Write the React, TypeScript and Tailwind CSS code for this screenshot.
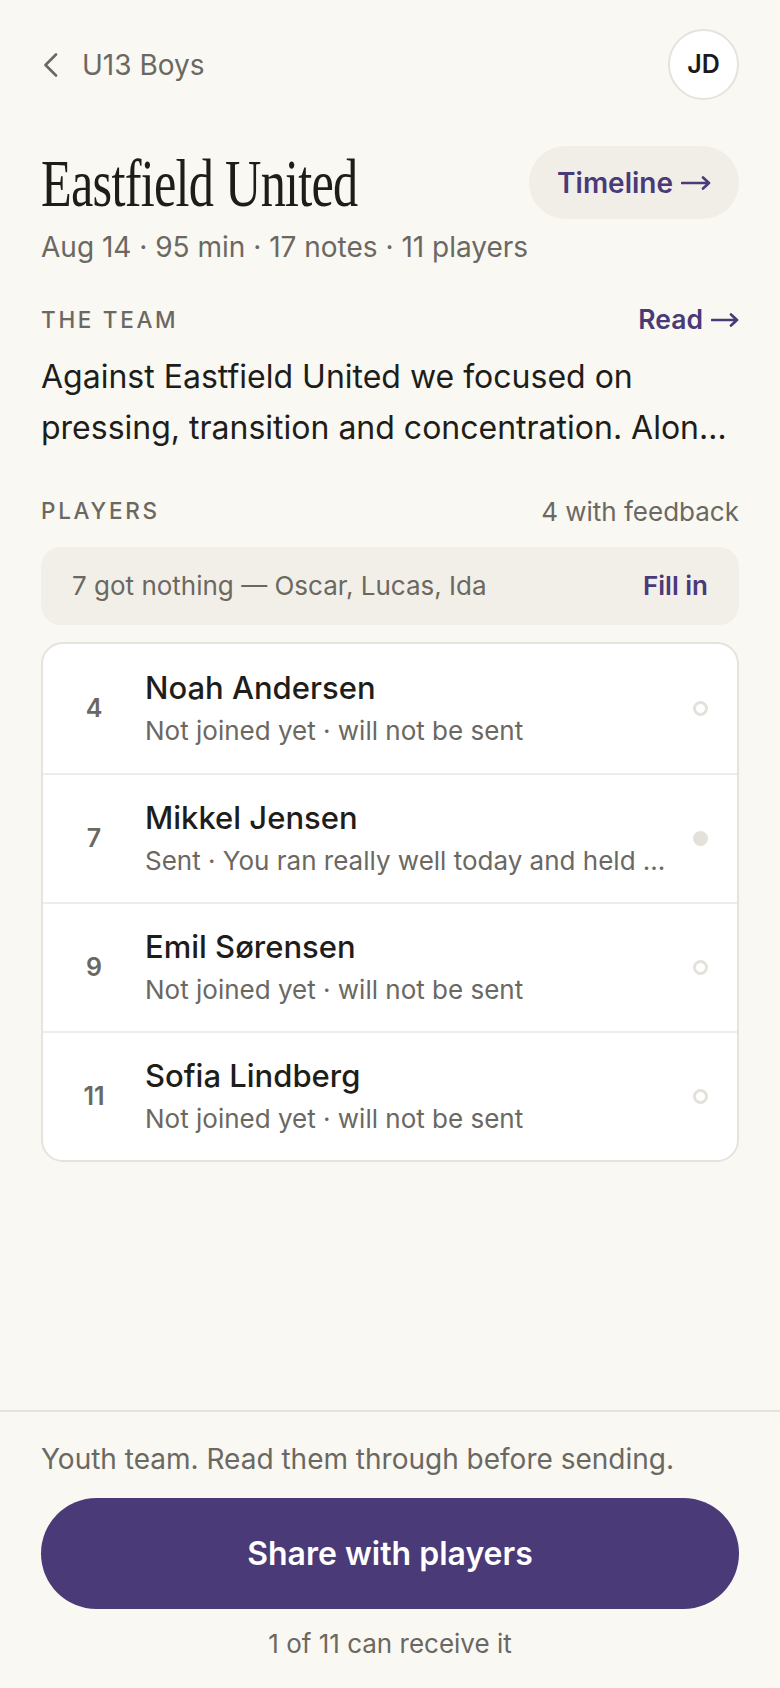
const players = [
  { num: 4, name: "Noah Andersen", sub: "Not joined yet · will not be sent", sent: false },
  { num: 7, name: "Mikkel Jensen", sub: "Sent · You ran really well today and held ...", sent: true },
  { num: 9, name: "Emil Sørensen", sub: "Not joined yet · will not be sent", sent: false },
  { num: 11, name: "Sofia Lindberg", sub: "Not joined yet · will not be sent", sent: false },
];

function Arrow({ w = 30 }: { w?: number }) {
  return (
    <svg width={w} height="14" viewBox={`0 0 ${w} 14`} fill="none" className="ml-[8px] shrink-0">
      <path d={`M1 7 H${w - 2} M${w - 8} 1.5 L${w - 2} 7 L${w - 8} 12.5`} stroke="currentColor" strokeWidth="2.6" strokeLinecap="round" strokeLinejoin="round" />
    </svg>
  );
}

export default function App() {
  return (
    <div className="min-h-screen flex flex-col bg-[#f9f8f2] text-[#1f1d1a] font-['Inter','Noto_Sans',sans-serif]">
      <main className="flex-1 px-[41px]">
        {/* top bar */}
        <div className="flex items-center justify-between pt-[29px]">
          <div className="flex items-center gap-[24px] text-[#6b6862]">
            <svg width="15" height="24" viewBox="0 0 15 24" fill="none" className="ml-[2px]">
              <path d="M13 1.5 L2.5 12 L13 22.5" stroke="currentColor" strokeWidth="2.6" strokeLinecap="round" strokeLinejoin="round" />
            </svg>
            <span className="text-[28px]">U13 Boys</span>
          </div>
          <div className="w-[71px] h-[71px] rounded-full bg-white border-2 border-[#e6e3dc] flex items-center justify-center text-[25px] font-semibold text-[#1a1a1a]">
            JD
          </div>
        </div>

        {/* title */}
        <div className="flex items-center justify-between mt-[46px]">
          <h1 className="font-['Liberation_Serif',serif] text-[68px] leading-none tracking-[-1px] origin-left scale-x-[0.74] whitespace-nowrap">
            Eastfield United
          </h1>
          <button className="h-[73px] px-[28px] rounded-full bg-[#f1eee8] text-[#4a3a78] text-[28px] font-semibold flex items-center">
            Timeline<Arrow />
          </button>
        </div>
        <p className="mt-[8px] text-[28px] leading-[40px] text-[#6b6862]">Aug 14 · 95 min · 17 notes · 11 players</p>

        {/* team */}
        <div className="flex items-center justify-between mt-[33px]">
          <span className="text-[22.5px] tracking-[0.12em] text-[#6b6862] font-medium">THE TEAM</span>
          <span className="text-[26.5px] font-semibold text-[#4a3a78] flex items-center">
            Read<Arrow w={28} />
          </span>
        </div>
        <p className="mt-[11px] text-[32px] leading-[51px] line-clamp-2">
          Against Eastfield United we focused on pressing, transition and concentration. Along the way the boys showed real effort and kept their shape well.
        </p>

        {/* players */}
        <div className="flex items-center justify-between mt-[39px]">
          <span className="text-[22.5px] tracking-[0.12em] text-[#6b6862] font-medium">PLAYERS</span>
          <span className="text-[26px] text-[#6b6862]">4 with feedback</span>
        </div>
        <div className="mt-[16px] h-[78px] rounded-[20px] bg-[#f2efe9] flex items-center justify-between px-[31px]">
          <span className="text-[26px] text-[#6b6862]">7 got nothing — Oscar, Lucas, Ida</span>
          <span className="text-[26px] font-semibold text-[#4a3a78]">Fill in</span>
        </div>

        <div className="mt-[17px] rounded-[22px] border-2 border-[#e6e3dc] bg-white overflow-hidden">
          {players.map((p, i) => (
            <div
              key={p.num}
              className={`h-[129px] flex items-center ${i > 0 ? "border-t-2 border-[#efede8]" : ""}`}
            >
              <div className="w-[102px] text-center text-[25px] font-semibold text-[#6b6862]">{p.num}</div>
              <div className="flex-1 min-w-0">
                <div className="text-[31px] leading-[38px] font-medium text-[#1f1d1a]">{p.name}</div>
                <div className="mt-[7px] text-[26px] leading-[34px] text-[#6b6862] truncate">{p.sub}</div>
              </div>
              <div className="w-[66px] flex justify-center pr-[8px]">
                {p.sent ? (
                  <span className="w-[15px] h-[15px] rounded-full bg-[#e4e1da]" />
                ) : (
                  <span className="w-[15px] h-[15px] rounded-full border-[3px] border-[#e4e1da]" />
                )}
              </div>
            </div>
          ))}
        </div>
      </main>

      {/* footer */}
      <footer className="border-t-2 border-[#e6e3dc] px-[41px] pt-[29px] pb-[28px]">
        <p className="text-[28px] leading-[36px] text-[#6b6862]">Youth team. Read them through before sending.</p>
        <button className="mt-[21px] w-full h-[111px] rounded-full bg-[#4a3a78] text-white text-[32px] font-semibold">
          Share with players
        </button>
        <p className="mt-[19px] text-center text-[26px] leading-[32px] text-[#6b6862]">1 of 11 can receive it</p>
      </footer>
    </div>
  );
}
